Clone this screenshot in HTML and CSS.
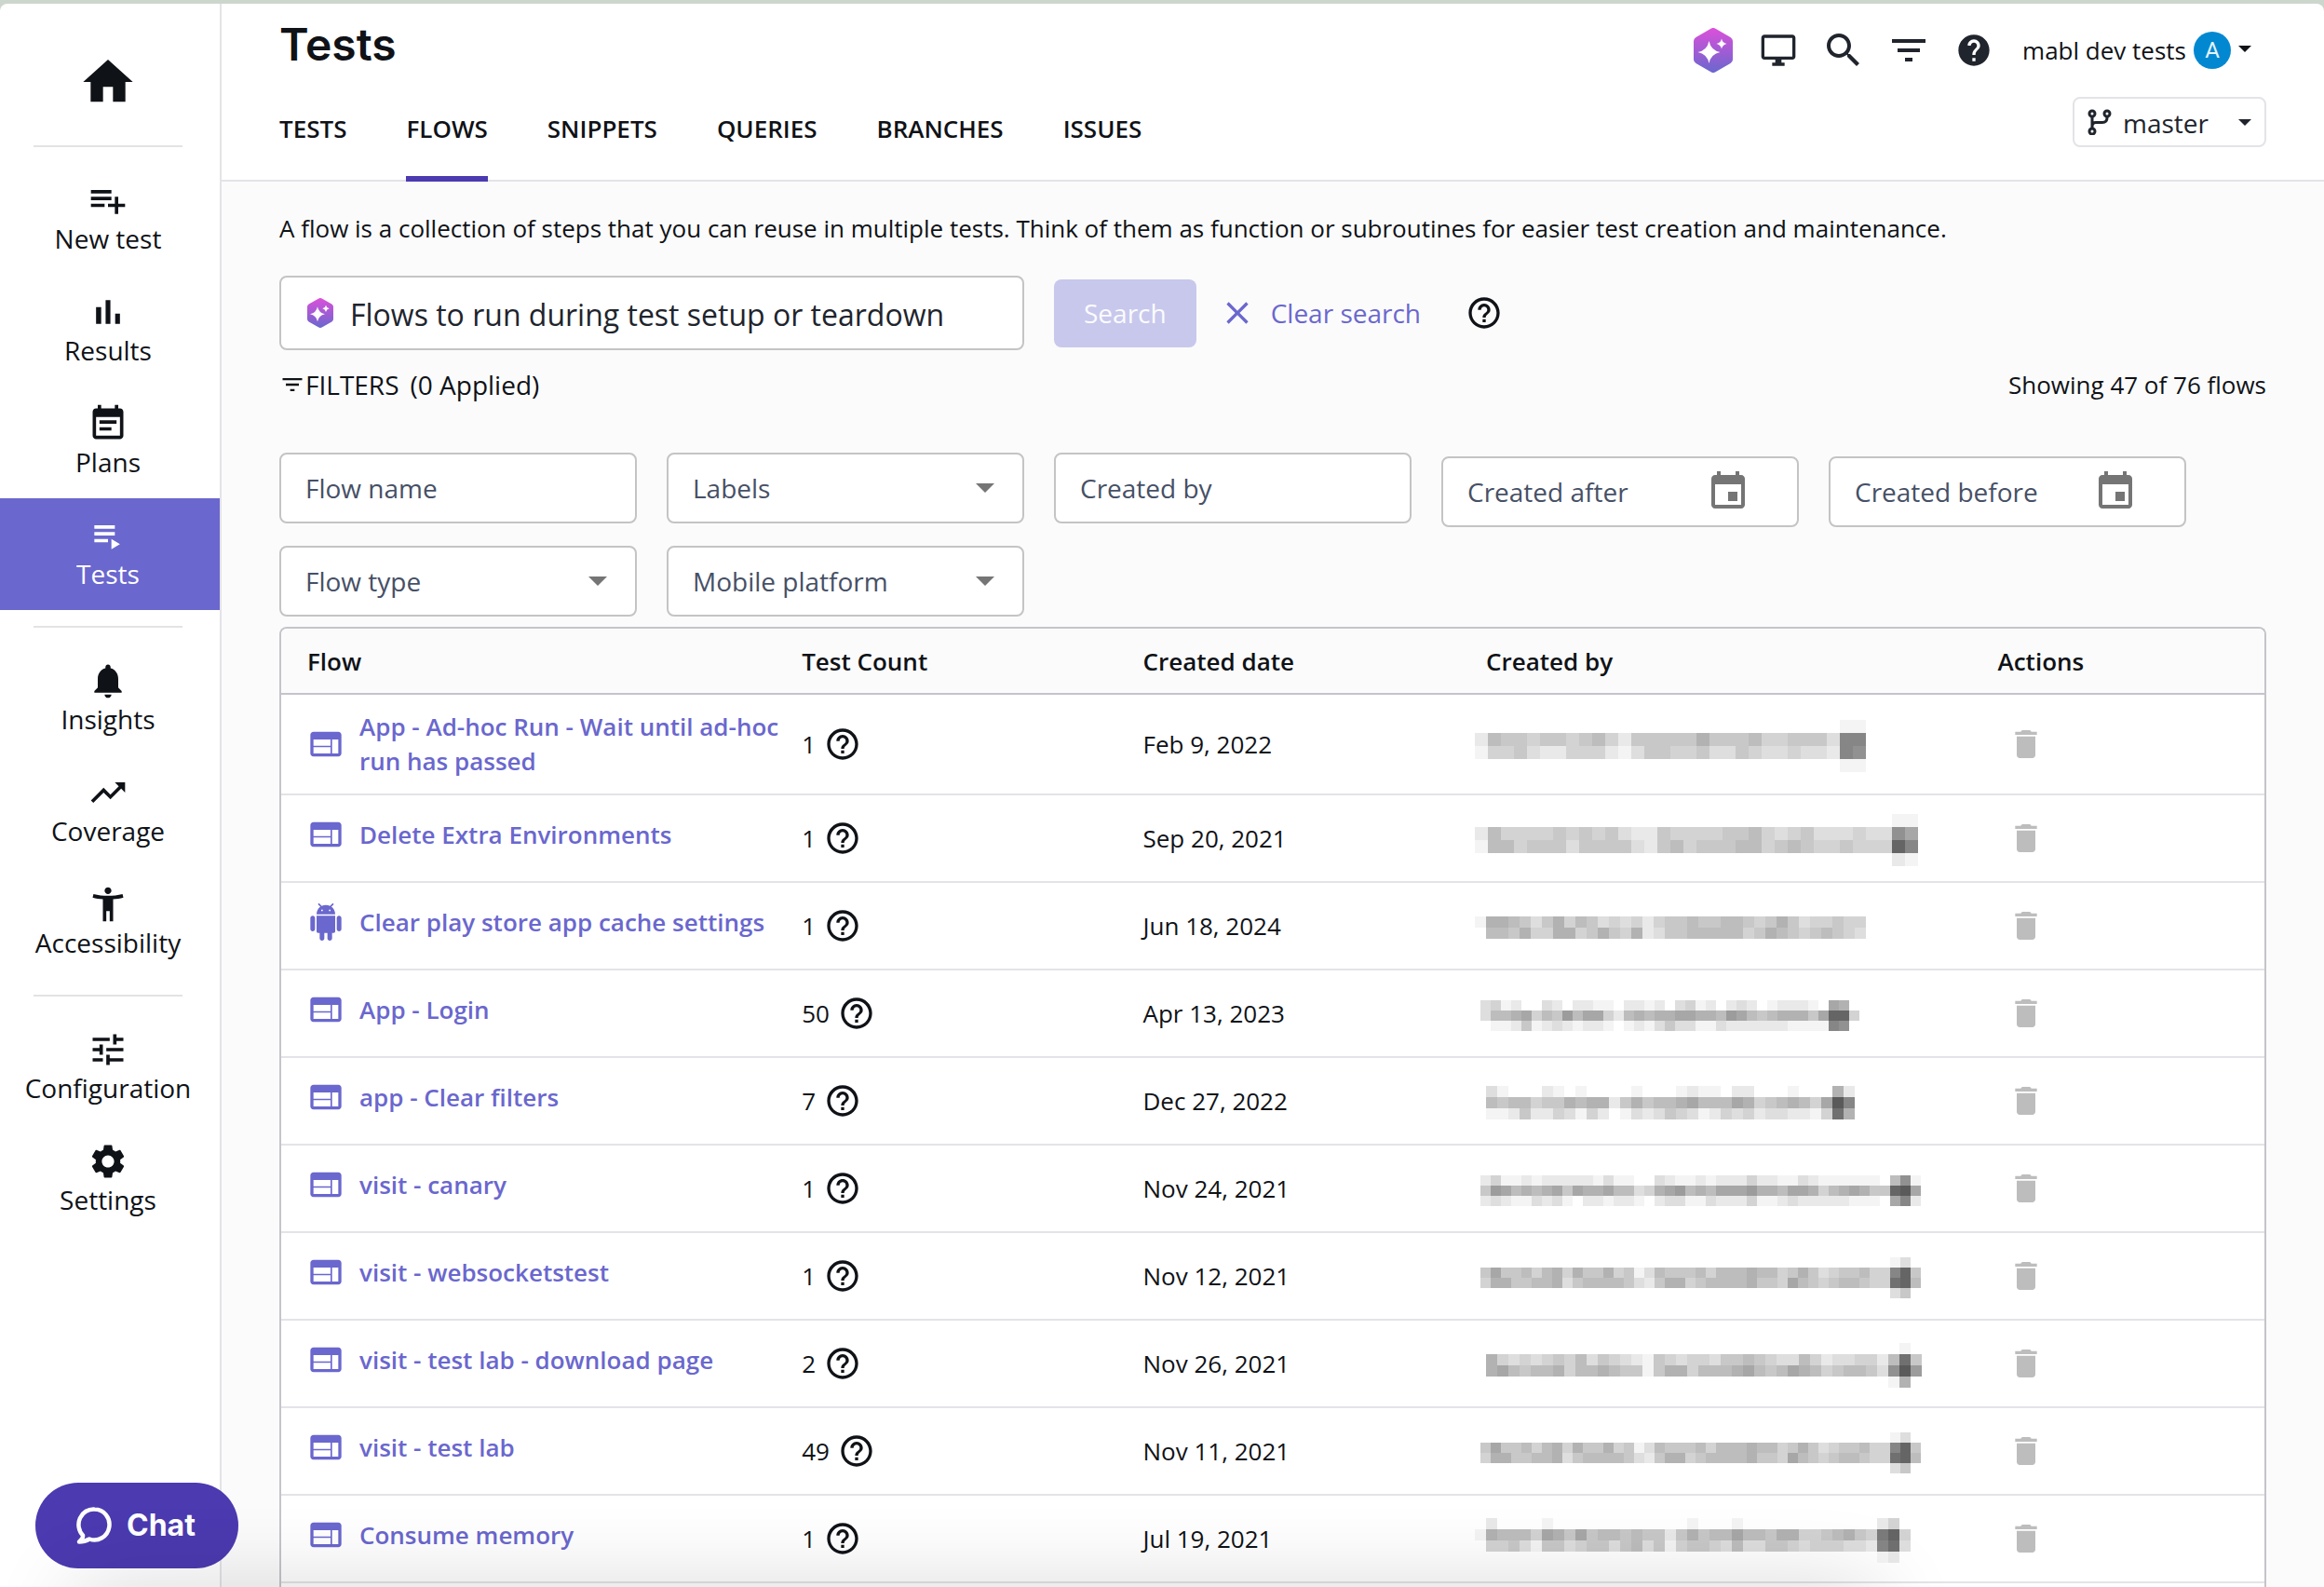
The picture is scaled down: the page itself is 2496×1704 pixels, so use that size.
FILE: index.html
```html
<!DOCTYPE html>
<html lang="en">
<head>
<meta charset="utf-8">
<meta name="viewport" content="width=device-width, initial-scale=1">
<title>Tests - Flows</title>
<link rel="stylesheet" href="styles.css">
<script src="app.js" defer></script>
</head>
<body>
<svg class="sprite" aria-hidden="true">
  <defs>
    <linearGradient id="ai-fill" x1="0" y1="0" x2="0" y2="1">
      <stop offset="0" stop-color="#dc50da"/>
      <stop offset="1" stop-color="#6a67ce"/>
    </linearGradient>
  </defs>
  <symbol id="i-ai" viewBox="0 0 42 48"><path fill="url(#ai-fill)" d="M18.5.7a5 5 0 0 1 5 0l16 9.2A5 5 0 0 1 42 14v20a5 5 0 0 1-2.500 4.100l-16 9.200a5 5 0 0 1-5 0l-16-9.200A5 5 0 0 1 0 34V14a5 5 0 0 1 2.500-4.100z"/><path fill="#fff" d="M16.500 14q2 10 12 12-10 2-12 12-2-10-12-12 10-2 12-12zM30 11.500q1 4.500 5.500 5.500-4.500 1-5.500 5.500-1-4.500-5.500-5.500 4.500-1 5.500-5.500z"/></symbol>
  <symbol id="i-home" viewBox="0 0 24 24"><path d="M10 20v-6h4v6h5v-8h3L12 3 2 12h3v8z"/></symbol>
  <symbol id="i-add" viewBox="0 0 24 24"><path d="M14 10H2v2h12v-2zm0-4H2v2h12V6zm4 8v-4h-2v4h-4v2h4v4h2v-4h4v-2h-4zM2 16h8v-2H2v2z"/></symbol>
  <symbol id="i-chart" viewBox="0 0 24 24"><path d="M5 9.200h3V19H5zM10.600 5h2.800v14h-2.800zm5.600 8H19v6h-2.800z"/></symbol>
  <symbol id="i-plans" viewBox="0 0 24 24"><path d="M19 3h-1V1h-2v2H8V1H6v2H5c-1.110 0-1.990.9-1.990 2L3 19c0 1.100.89 2 2 2h14c1.100 0 2-.9 2-2V5c0-1.100-.9-2-2-2zm0 16H5V8h14v11zM17 10H7v2h10v-2zm-3 4H7v2h7v-2z"/></symbol>
  <symbol id="i-play" viewBox="0 0 24 24"><path d="M4 10h12v2H4zm0-4h12v2H4zm0 8h8v2H4zm10 0v6l5-3z"/></symbol>
  <symbol id="i-bell" viewBox="0 0 24 24"><path d="M12 22c1.100 0 2-.9 2-2h-4c0 1.100.89 2 2 2zm6-6v-5c0-3.070-1.640-5.640-4.500-6.320V4c0-.83-.67-1.500-1.500-1.500s-1.500.67-1.500 1.500v.68C7.630 5.360 6 7.920 6 11v5l-2 2v1h16v-1l-2-2z"/></symbol>
  <symbol id="i-trend" viewBox="0 0 24 24"><path d="M16 6l2.290 2.290-4.880 4.880-4-4L2 16.590 3.410 18l6-6 4 4 6.300-6.290L22 12V6z"/></symbol>
  <symbol id="i-access" viewBox="0 0 24 24"><path d="M20.500 6c-2.610.7-5.670 1-8.500 1s-5.890-.3-8.500-1L3 8c1.860.5 4 .83 6 1v13h2v-6h2v6h2V9c2-.17 4.140-.5 6-1l-.5-2zM12 6c1.100 0 2-.9 2-2s-.9-2-2-2-2 .9-2 2 .9 2 2 2z"/></symbol>
  <symbol id="i-tune" viewBox="0 0 24 24"><path d="M3 17v2h6v-2H3zM3 5v2h10V5H3zm10 16v-2h8v-2h-8v-2h-2v6h2zM7 9v2H3v2h4v2h2V9H7zm14 4v-2H11v2h10zm-6-4h2V7h4V5h-4V3h-2v6z"/></symbol>
  <symbol id="i-gear" viewBox="0 0 24 24"><path d="M19.140 12.940c.04-.3.06-.61.06-.94 0-.32-.02-.64-.07-.94l2.030-1.580c.18-.14.23-.41.12-.61l-1.920-3.320c-.12-.22-.37-.29-.59-.22l-2.390.96c-.5-.38-1.030-.7-1.620-.94l-.36-2.540c-.04-.24-.24-.41-.48-.41h-3.840c-.24 0-.43.17-.47.41l-.36 2.540c-.59.24-1.130.57-1.620.94l-2.390-.96c-.22-.08-.47 0-.59.22L2.740 8.870c-.12.21-.08.47.12.61l2.030 1.580c-.05.3-.09.63-.09.94s.02.64.07.94l-2.030 1.580c-.18.14-.23.41-.12.61l1.920 3.320c.12.22.37.29.59.22l2.390-.96c.5.38 1.030.7 1.620.94l.36 2.540c.05.24.24.41.48.41h3.840c.24 0 .44-.17.47-.41l.36-2.540c.59-.24 1.130-.56 1.620-.94l2.390.96c.22.08.47 0 .59-.22l1.920-3.320c.12-.22.07-.47-.12-.61l-2.010-1.580zM12 15.600c-1.980 0-3.600-1.620-3.600-3.600s1.620-3.600 3.600-3.600 3.600 1.620 3.600 3.600-1.620 3.600-3.600 3.600z"/></symbol>
  <symbol id="i-monitor" viewBox="0 0 24 24"><path d="M21 2H3c-1.100 0-2 .9-2 2v12c0 1.100.9 2 2 2h7v2H8v2h8v-2h-2v-2h7c1.100 0 2-.9 2-2V4c0-1.100-.9-2-2-2zm0 14H3V4h18v12z"/></symbol>
  <symbol id="i-search" viewBox="0 0 24 24"><path d="M15.500 14h-.79l-.28-.27C15.410 12.590 16 11.110 16 9.500 16 5.910 13.090 3 9.500 3S3 5.910 3 9.500 5.910 16 9.500 16c1.610 0 3.090-.59 4.230-1.570l.27.28v.79l5 4.990L20.490 19l-4.990-5zm-6 0C7.010 14 5 11.990 5 9.500S7.010 5 9.500 5 14 7.010 14 9.500 11.990 14 9.500 14z"/></symbol>
  <symbol id="i-filter" viewBox="0 0 24 24"><path d="M10 18h4v-2h-4v2zM3 6v2h18V6H3zm3 7h12v-2H6v2z"/></symbol>
  <symbol id="i-help-full" viewBox="0 0 24 24"><path d="M12 2C6.480 2 2 6.480 2 12s4.480 10 10 10 10-4.480 10-10S17.520 2 12 2zm1 17h-2v-2h2v2zm2.070-7.750l-.9.920C13.450 12.900 13 13.500 13 15h-2v-.5c0-1.100.45-2.100 1.170-2.830l1.240-1.260c.37-.36.59-.86.59-1.410 0-1.100-.9-2-2-2s-2 .9-2 2H8c0-2.210 1.790-4 4-4s4 1.790 4 4c0 .88-.36 1.680-.93 2.250z"/></symbol>
  <symbol id="i-help" viewBox="0 0 24 24"><path d="M11 18h2v-2h-2v2zm1-16C6.480 2 2 6.480 2 12s4.480 10 10 10 10-4.480 10-10S17.520 2 12 2zm0 18c-4.410 0-8-3.590-8-8s3.590-8 8-8 8 3.590 8 8-3.590 8-8 8zm0-14c-2.210 0-4 1.790-4 4h2c0-1.100.9-2 2-2s2 .9 2 2c0 2-3 1.750-3 5h2c0-2.250 3-2.500 3-5 0-2.210-1.790-4-4-4z"/></symbol>
  <symbol id="i-close" viewBox="0 0 24 24"><path d="M19 6.410L17.590 5 12 10.590 6.410 5 5 6.410 10.590 12 5 17.590 6.410 19 12 13.410 17.590 19 19 17.590 13.410 12z"/></symbol>
  <symbol id="i-event" viewBox="0 0 24 24"><path d="M17 12h-5v5h5v-5zM16 1v2H8V1H6v2H5c-1.110 0-1.990.9-1.990 2L3 19c0 1.100.89 2 2 2h14c1.100 0 2-.9 2-2V5c0-1.100-.9-2-2-2h-1V1h-2zm3 18H5V8h14v11z"/></symbol>
  <symbol id="i-web" viewBox="0 0 24 24"><path d="M20 4H4c-1.100 0-1.990.9-1.990 2L2 18c0 1.100.9 2 2 2h16c1.100 0 2-.9 2-2V6c0-1.100-.9-2-2-2zm-5 14H4v-4h11v4zm0-5H4V9h11v4zm5 5h-4V9h4v9z"/></symbol>
  <symbol id="i-android" viewBox="0 0 24 24"><path d="M6 18c0 .55.45 1 1 1h1v3.500c0 .83.67 1.500 1.500 1.500s1.500-.67 1.500-1.500V19h2v3.500c0 .83.67 1.500 1.500 1.500s1.500-.67 1.500-1.500V19h1c.55 0 1-.45 1-1V8H6v10zM3.500 8C2.670 8 2 8.670 2 9.500v7c0 .83.67 1.500 1.500 1.500S5 17.330 5 16.500v-7C5 8.670 4.330 8 3.500 8zm17 0c-.83 0-1.500.67-1.500 1.500v7c0 .83.67 1.500 1.500 1.500s1.500-.67 1.500-1.500v-7c0-.83-.67-1.500-1.500-1.500zm-4.970-5.840l1.300-1.300c.2-.2.2-.51 0-.71-.2-.2-.51-.2-.71 0l-1.480 1.480C13.850 1.230 12.950 1 12 1c-.96 0-1.860.23-2.660.63L7.850.15c-.2-.2-.51-.2-.71 0-.2.2-.2.51 0 .71l1.310 1.310C6.970 3.260 6 5.010 6 7h12c0-1.990-.97-3.750-2.470-4.840zM10 5H9V4h1v1zm5 0h-1V4h1v1z"/></symbol>
  <symbol id="i-trash" viewBox="0 0 24 24"><path d="M6 19c0 1.100.9 2 2 2h8c1.100 0 2-.9 2-2V7H6v12zM19 4h-3.500l-1-1h-5l-1 1H5v2h14V4z"/></symbol>
  <symbol id="i-caret" viewBox="0 0 20 10"><path d="M0 0h20L10 10z"/></symbol>
  <symbol id="i-branch" viewBox="0 0 26 28"><g fill="none" stroke="currentColor" stroke-width="3"><circle cx="5" cy="5" r="3"/><circle cx="21" cy="5" r="3"/><circle cx="5" cy="24" r="3"/><path d="M5 8v13M21 8v1.500q0 5-5 5H9q-4 0-4 4"/></g></symbol>
  <symbol id="i-chat" viewBox="0 0 38 40"><path fill="none" stroke="currentColor" stroke-width="4.500" stroke-linejoin="round" d="M19.500 2.500a16 16.500 0 1 1-5.500 32q-5 3-11 3 4.500-3.500 4-7A16 16.500 0 0 1 19.500 2.500z"/></symbol>
</svg>

<div class="app">
  <nav class="sidebar" aria-label="Main">
    <a class="home" href="#" aria-label="Home"><svg class="icon-64"><use href="#i-home"/></svg></a>
    <hr class="rule">
    <a class="nav-item" href="#"><svg class="icon-44"><use href="#i-add"/></svg>New test</a>
    <a class="nav-item" href="#"><svg class="icon-44"><use href="#i-chart"/></svg>Results</a>
    <a class="nav-item" href="#"><svg class="icon-44"><use href="#i-plans"/></svg>Plans</a>
    <a class="nav-item is-active" href="#" aria-current="page"><svg class="icon-44"><use href="#i-play"/></svg>Tests</a>
    <hr class="rule">
    <a class="nav-item" href="#"><svg class="icon-44"><use href="#i-bell"/></svg>Insights</a>
    <a class="nav-item" href="#"><svg class="icon-44"><use href="#i-trend"/></svg>Coverage</a>
    <a class="nav-item" href="#"><svg class="icon-44"><use href="#i-access"/></svg>Accessibility</a>
    <hr class="rule">
    <a class="nav-item" href="#"><svg class="icon-44"><use href="#i-tune"/></svg>Configuration</a>
    <a class="nav-item" href="#"><svg class="icon-44"><use href="#i-gear"/></svg>Settings</a>
  </nav>

  <div class="page">
    <header class="header">
      <div class="header-left">
        <h1 class="title">Tests</h1>
        <nav class="tabs" aria-label="Tests sections">
          <a class="tab" href="#">TESTS</a>
          <a class="tab is-active" href="#" aria-current="page">FLOWS</a>
          <a class="tab" href="#">SNIPPETS</a>
          <a class="tab" href="#">QUERIES</a>
          <a class="tab" href="#">BRANCHES</a>
          <a class="tab" href="#">ISSUES</a>
        </nav>
      </div>
      <div class="header-right">
        <div class="tools">
          <button class="tool" type="button" aria-label="Assistant"><svg class="icon-ai"><use href="#i-ai"/></svg></button>
          <button class="tool" type="button" aria-label="Desktop app"><svg class="icon-40"><use href="#i-monitor"/></svg></button>
          <button class="tool" type="button" aria-label="Search"><svg class="icon-48"><use href="#i-search"/></svg></button>
          <button class="tool" type="button" aria-label="Filter"><svg class="icon-48"><use href="#i-filter"/></svg></button>
          <button class="tool" type="button" aria-label="Help"><svg class="icon-40"><use href="#i-help-full"/></svg></button>
          <button class="account" type="button">mabl dev tests <span class="avatar">A</span><svg class="caret-sm"><use href="#i-caret"/></svg></button>
        </div>
        <div class="branch">
          <svg class="branch-icon"><use href="#i-branch"/></svg>
          <select class="branch-select" aria-label="Branch"><option>master</option></select>
          <svg class="caret-sm"><use href="#i-caret"/></svg>
        </div>
      </div>
    </header>

    <main class="main">
      <p class="intro">A flow is a collection of steps that you can reuse in multiple tests. Think of them as function or subroutines for easier test creation and maintenance.</p>

      <form class="search">
        <label class="search-box">
          <svg class="icon-ai-sm"><use href="#i-ai"/></svg>
          <input class="search-input" type="text" aria-label="Search flows" value="Flows to run during test setup or teardown">
        </label>
        <button class="search-button" type="button" disabled>Search</button>
        <button class="clear" type="button"><svg class="icon-40"><use href="#i-close"/></svg>Clear search</button>
        <button class="tip" type="button" aria-label="About search"><svg class="icon-40"><use href="#i-help"/></svg></button>
      </form>

      <div class="summary">
        <button class="filters-toggle" type="button"><svg class="icon-28"><use href="#i-filter"/></svg>FILTERS <span class="applied">(0 Applied)</span></button>
        <span class="showing">Showing 47 of 76 flows</span>
      </div>

      <div class="filters">
        <div class="field"><input class="control" type="text" placeholder="Flow name" aria-label="Flow name"></div>
        <div class="field"><select class="control" aria-label="Labels"><option>Labels</option></select><svg class="caret"><use href="#i-caret"/></svg></div>
        <div class="field"><input class="control" type="text" placeholder="Created by" aria-label="Created by"></div>
        <div class="field field-date"><input class="control" type="text" placeholder="Created after" aria-label="Created after"><button class="pick" type="button" aria-label="Choose date"><svg class="icon-48"><use href="#i-event"/></svg></button></div>
        <div class="field field-date"><input class="control" type="text" placeholder="Created before" aria-label="Created before"><button class="pick" type="button" aria-label="Choose date"><svg class="icon-48"><use href="#i-event"/></svg></button></div>
        <div class="field"><select class="control" aria-label="Flow type"><option>Flow type</option></select><svg class="caret"><use href="#i-caret"/></svg></div>
        <div class="field"><select class="control" aria-label="Mobile platform"><option>Mobile platform</option></select><svg class="caret"><use href="#i-caret"/></svg></div>
      </div>

      <div class="table-card">
        <table class="flows">
          <colgroup><col class="col-flow"><col class="col-count"><col class="col-date"><col class="col-by"><col class="col-actions"></colgroup>
          <thead>
            <tr><th scope="col">Flow</th><th scope="col">Test Count</th><th scope="col">Created date</th><th scope="col">Created by</th><th scope="col">Actions</th></tr>
          </thead>
          <tbody>
            <tr>
              <td><a class="flow" href="#"><svg class="icon-40"><use href="#i-web"/></svg><span>App - Ad-hoc Run - Wait until ad-hoc run has passed</span></a></td>
              <td><span class="count">1<svg class="icon-40"><use href="#i-help"/></svg></span></td>
              <td>Feb 9, 2022</td>
              <td><svg class="redacted" data-cell="14"></svg></td>
              <td><button class="delete" type="button" aria-label="Delete"><svg class="icon-40"><use href="#i-trash"/></svg></button></td>
            </tr>
            <tr>
              <td><a class="flow" href="#"><svg class="icon-40"><use href="#i-web"/></svg><span>Delete Extra Environments</span></a></td>
              <td><span class="count">1<svg class="icon-40"><use href="#i-help"/></svg></span></td>
              <td>Sep 20, 2021</td>
              <td><svg class="redacted" data-cell="14"></svg></td>
              <td><button class="delete" type="button" aria-label="Delete"><svg class="icon-40"><use href="#i-trash"/></svg></button></td>
            </tr>
            <tr>
              <td><a class="flow" href="#"><svg class="icon-40"><use href="#i-android"/></svg><span>Clear play store app cache settings</span></a></td>
              <td><span class="count">1<svg class="icon-40"><use href="#i-help"/></svg></span></td>
              <td>Jun 18, 2024</td>
              <td><svg class="redacted" data-cell="12"></svg></td>
              <td><button class="delete" type="button" aria-label="Delete"><svg class="icon-40"><use href="#i-trash"/></svg></button></td>
            </tr>
            <tr>
              <td><a class="flow" href="#"><svg class="icon-40"><use href="#i-web"/></svg><span>App - Login</span></a></td>
              <td><span class="count">50<svg class="icon-40"><use href="#i-help"/></svg></span></td>
              <td>Apr 13, 2023</td>
              <td><svg class="redacted redacted-fine" data-cell="11"></svg></td>
              <td><button class="delete" type="button" aria-label="Delete"><svg class="icon-40"><use href="#i-trash"/></svg></button></td>
            </tr>
            <tr>
              <td><a class="flow" href="#"><svg class="icon-40"><use href="#i-web"/></svg><span>app - Clear filters</span></a></td>
              <td><span class="count">7<svg class="icon-40"><use href="#i-help"/></svg></span></td>
              <td>Dec 27, 2022</td>
              <td><svg class="redacted" data-cell="12"></svg></td>
              <td><button class="delete" type="button" aria-label="Delete"><svg class="icon-40"><use href="#i-trash"/></svg></button></td>
            </tr>
            <tr>
              <td><a class="flow" href="#"><svg class="icon-40"><use href="#i-web"/></svg><span>visit - canary</span></a></td>
              <td><span class="count">1<svg class="icon-40"><use href="#i-help"/></svg></span></td>
              <td>Nov 24, 2021</td>
              <td><svg class="redacted redacted-fine" data-cell="11"></svg></td>
              <td><button class="delete" type="button" aria-label="Delete"><svg class="icon-40"><use href="#i-trash"/></svg></button></td>
            </tr>
            <tr>
              <td><a class="flow" href="#"><svg class="icon-40"><use href="#i-web"/></svg><span>visit - websocketstest</span></a></td>
              <td><span class="count">1<svg class="icon-40"><use href="#i-help"/></svg></span></td>
              <td>Nov 12, 2021</td>
              <td><svg class="redacted redacted-fine" data-cell="11"></svg></td>
              <td><button class="delete" type="button" aria-label="Delete"><svg class="icon-40"><use href="#i-trash"/></svg></button></td>
            </tr>
            <tr>
              <td><a class="flow" href="#"><svg class="icon-40"><use href="#i-web"/></svg><span>visit - test lab - download page</span></a></td>
              <td><span class="count">2<svg class="icon-40"><use href="#i-help"/></svg></span></td>
              <td>Nov 26, 2021</td>
              <td><svg class="redacted" data-cell="12"></svg></td>
              <td><button class="delete" type="button" aria-label="Delete"><svg class="icon-40"><use href="#i-trash"/></svg></button></td>
            </tr>
            <tr>
              <td><a class="flow" href="#"><svg class="icon-40"><use href="#i-web"/></svg><span>visit - test lab</span></a></td>
              <td><span class="count">49<svg class="icon-40"><use href="#i-help"/></svg></span></td>
              <td>Nov 11, 2021</td>
              <td><svg class="redacted redacted-fine" data-cell="11"></svg></td>
              <td><button class="delete" type="button" aria-label="Delete"><svg class="icon-40"><use href="#i-trash"/></svg></button></td>
            </tr>
            <tr>
              <td><a class="flow" href="#"><svg class="icon-40"><use href="#i-web"/></svg><span>Consume memory</span></a></td>
              <td><span class="count">1<svg class="icon-40"><use href="#i-help"/></svg></span></td>
              <td>Jul 19, 2021</td>
              <td><svg class="redacted" data-cell="12"></svg></td>
              <td><button class="delete" type="button" aria-label="Delete"><svg class="icon-40"><use href="#i-trash"/></svg></button></td>
            </tr>
          </tbody>
        </table>
      </div>
    </main>
  </div>
</div>

<button class="chat" type="button"><svg class="chat-icon"><use href="#i-chat"/></svg>Chat</button>
<div class="edge-shadow"></div>
</body>
</html>
```
FILE: app.js
```javascript
// Redacted names, one entry per table row. Each string is a band of cells,
// each hex digit a shade (0 = none, f = darkest).
const names = [
  ['000000000000000000000000000011',
   '2655455456425555575556445553bb',
   '1445322444213554453354334332ba',
   '000000000000000000000000000011'],
  ['0000000000000000000000000000000011',
   '26444454545322544445564345333433a8',
   '16645553555532564555664565445444eb',
   '0000000000000000000000000000000021'],
  ['17765357465343424556556654575344544',
   '06657447745754723556666645765456543'],
  ['3412003202211022120341202320122210870',
   '3667846596884267677887769865677758ee4',
   '0112512321221012135331132222221111ba0'],
  ['0310002101000010001211022000100072',
   '06566455767725756678666874567648fb',
   '01125224314201323543124342332214d7'],
  ['24112122222131100321121222422113211111106a1',
   '59867678587786634789676888977688746787 55ef8'.replace(' ', ''),
   '2321132310221221023311322241123222221110' + '8b2'],
  ['0000000000000000000000000000000000000000130',
   '58556467475574513655564666766457534556' + '44be5',
   '47755667356666532577456666755486545665' + '44de6',
   '0000000000000000000000000000000000000000350'],
  ['0000000000000000000000000000000000000010',
   '0743434546354321543443556543364233442' + '6d5',
   '0786566746676551577466678656876456653' + 'af9',
   '0000000000000000000000000000000000000170'],
  ['0000000000000000000000000000000000000000130',
   '58556467475574513655564666766457534556' + '44be5',
   '47755667356666532577456666755486545665' + '44de6',
   '0000000000000000000000000000000000000000350'],
  ['020000100000000000010001000000000000240',
   '176664875856656552575668665774456754ce4',
   '044531553455356351455436335543444332bd3',
   '000000000000000000000000000000000000120']
];

document.querySelectorAll('.redacted').forEach((svg, n) => {
  const size = Number(svg.dataset.cell);
  const bands = names[n];
  svg.setAttribute('width', bands[0].length * size);
  svg.setAttribute('height', bands.length * size);
  bands.forEach((band, y) => {
    [...band].forEach((digit, x) => {
      const shade = parseInt(digit, 16);
      if (!shade) return;
      const level = 255 - shade * 11;
      const cell = document.createElementNS('http://www.w3.org/2000/svg', 'rect');
      cell.setAttribute('x', x * size);
      cell.setAttribute('y', y * size);
      cell.setAttribute('width', size);
      cell.setAttribute('height', size);
      cell.setAttribute('fill', `rgb(${level} ${level} ${level + 1})`);
      svg.append(cell);
    });
  });
});
```
FILE: styles.css
```css
* { box-sizing: border-box; }

body {
  margin: 0;
  padding-top: 4px;
  height: 100vh;
  overflow: hidden;
  background: #cdd6cc;
  color: #0f1217;
  font: 26px/36px "Open Sans", sans-serif;
}

a { color: inherit; text-decoration: none; }
button, input, select { font: inherit; color: inherit; margin: 0; }
button { padding: 0; border: 0; background: none; }
select { appearance: none; }
svg { display: block; flex: none; fill: currentColor; }

.sprite { position: absolute; width: 0; height: 0; }
.icon-28 { width: 28px; height: 28px; }
.icon-40 { width: 40px; height: 40px; }
.icon-44 { width: 44px; height: 44px; }
.icon-48 { width: 48px; height: 48px; }
.icon-64 { width: 64px; height: 64px; }
.icon-ai { width: 42px; height: 48px; }
.icon-ai-sm { width: 28px; height: 32px; }

.app {
  display: flex;
  height: 100%;
  background: #fff;
  border-radius: 8px 8px 0 0;
  overflow: hidden;
}

/* Sidebar */
.sidebar {
  flex: none;
  width: 238px;
  border-right: 2px solid #e3e3e8;
}
.home {
  display: flex;
  justify-content: center;
  padding: 52px 4px 36px 0;
}
.rule {
  width: 160px;
  height: 2px;
  margin: 0 0 17px 36px;
  border: 0;
  background: #e3e3e3;
}
.nav-item + .rule { margin-top: 17px; }
.nav-item {
  display: flex;
  flex-direction: column;
  align-items: center;
  height: 120px;
  padding: 18px 4px 0 0;
  font-size: 28px;
  line-height: 38px;
}
.nav-item.is-active { background: #6a67ce; color: #fff; }

/* Header */
.page {
  flex: 1;
  min-width: 0;
  display: flex;
  flex-direction: column;
}
.header {
  display: flex;
  justify-content: space-between;
  padding: 0 62px;
  box-shadow: inset 0 -2px #e3e3e8;
}
.title {
  margin: 16px 0 44px;
  font: 600 48px/56px Inter, sans-serif;
}
.tabs { display: flex; gap: 64px; }
.tab {
  padding-bottom: 33px;
  border-bottom: 6px solid transparent;
  font-weight: 600;
}
.tab.is-active { border-color: #4b3ab0; }
.header-right {
  display: flex;
  flex-direction: column;
  align-items: flex-end;
  gap: 26px;
  padding-top: 26px;
}
.tools {
  display: flex;
  align-items: center;
  gap: 22px;
  color: #20242d;
}
.tool {
  display: flex;
  align-items: center;
  justify-content: center;
  width: 48px;
  height: 48px;
}
.account {
  display: flex;
  align-items: center;
  gap: 8px;
  padding: 0 16px 0 6px;
  color: #0f1217;
}
.avatar {
  width: 40px;
  height: 40px;
  border-radius: 50%;
  background: #0288d1;
  color: #e6f3fa;
  font: 24px/40px Roboto, sans-serif;
}
.caret-sm { width: 14px; height: 7px; }
.account .caret-sm { margin-bottom: 4px; }
.branch {
  display: flex;
  align-items: center;
  width: 208px;
  height: 54px;
  padding: 0 14px;
  border: 2px solid #e3e3e8;
  border-radius: 8px;
  color: #20242d;
}
.branch-icon { width: 26px; height: 28px; }
.branch-select {
  flex: 1;
  min-width: 0;
  padding: 2px 0 0 12px;
  border: 0;
  background: none;
  font-size: 28px;
}

/* Main */
.main {
  flex: 1;
  min-height: 0;
  display: flex;
  flex-direction: column;
  padding: 32px 62px 0;
  background: #fbfbfb;
}
.intro { margin: 0 0 33px; }
.search {
  display: flex;
  align-items: center;
  font-size: 28px;
}
.search-box {
  display: flex;
  align-items: center;
  gap: 18px;
  width: 800px;
  height: 80px;
  padding: 0 28px;
  border: 2px solid #c4c4c4;
  border-radius: 8px;
  background: #fff;
}
.search-input {
  flex: 1;
  min-width: 0;
  height: 56px;
  padding: 2px 0 0;
  border: 0;
  background: none;
  color: #20242d;
  font-size: 32px;
}
.search-button {
  height: 73px;
  margin-left: 32px;
  padding: 0 32px;
  border-radius: 8px;
  background: #c8c8ec;
  color: #fbfbfe;
}
.clear {
  display: flex;
  align-items: center;
  gap: 16px;
  margin-left: 24px;
  color: #6a67ce;
}
.tip { margin-left: 48px; }
.summary {
  display: flex;
  align-items: center;
  justify-content: space-between;
  height: 40px;
  margin: 17px 0 53px;
}
.filters-toggle {
  display: flex;
  align-items: center;
  font-size: 28px;
}
.applied { margin-left: 12px; }

.filters {
  display: grid;
  grid-template-columns: repeat(auto-fill, 384px);
  align-items: start;
  gap: 20px 32px;
}
.field {
  display: flex;
  align-items: center;
  height: 76px;
  border: 2px solid #c4c4c4;
  border-radius: 8px;
  background: #fff;
  color: #757575;
}
.field-date { margin-top: 4px; padding-right: 50px; }
.control {
  flex: 1;
  min-width: 0;
  align-self: stretch;
  padding: 0 26px;
  border: 0;
  background: none;
  color: #465066;
  font-size: 28px;
}
.control::placeholder { color: #465066; opacity: 1; }
.caret { width: 20px; height: 10px; margin: 0 30px 0 -20px; }

/* Table */
.table-card {
  flex: 1;
  min-height: 0;
  margin-top: 11px;
  border: 2px solid #c4c4cc;
  border-bottom: 0;
  border-radius: 8px 8px 0 0;
  background: #fff;
  overflow: hidden;
}
.flows {
  width: 100%;
  table-layout: fixed;
  border-spacing: 0;
}
.col-flow { width: 25.5%; }
.col-count { width: 17.2%; }
.col-date { width: 17.3%; }
.col-by { width: 25.8%; }
.col-actions { width: 14.2%; }
.flows th {
  height: 71px;
  padding: 0 16px;
  border-bottom: 2px solid #c4c4cc;
  background: #fbfbfb;
  font-weight: 600;
  text-align: left;
}
.flows td {
  padding: 16px;
  border-bottom: 2px solid #e3e3e8;
}
.flows th:first-child { padding-left: 28px; }
.flows td:first-child { padding: 16px 0 16px 28px; vertical-align: top; }
.flows td:nth-child(4) { padding: 4px 4px 0; }
.flow {
  display: flex;
  align-items: center;
  gap: 16px;
  min-height: 52px;
  color: #6a67ce;
  font-weight: 600;
  line-height: 37px;
}
.count { display: flex; align-items: center; gap: 9px; }
.redacted { shape-rendering: crispEdges; }
.redacted-fine { margin-left: 6px; }
.delete { display: block; padding: 10px; color: #bdbdbd; }

/* Chat launcher and the shade along the lower edge */
.chat {
  position: fixed;
  left: 38px;
  bottom: 20px;
  display: flex;
  align-items: center;
  gap: 16px;
  height: 92px;
  padding: 0 46px 0 44px;
  border-radius: 46px;
  background: #4b3ab0;
  color: #fff;
  font: 700 32px/40px Inter, sans-serif;
}
.chat-icon { width: 38px; height: 40px; }
.edge-shadow {
  position: fixed;
  left: 80px;
  right: 480px;
  top: 100%;
  height: 80px;
  box-shadow: 0 0 90px rgb(0 0 0 / 16%);
  pointer-events: none;
}
```
